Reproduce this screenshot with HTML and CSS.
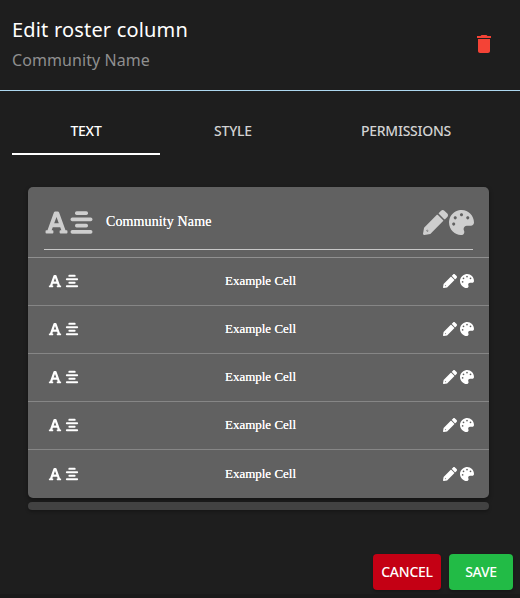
FILE: index.html
```html
<!DOCTYPE html>
<html lang="en">
<head>
<meta charset="utf-8">
<title>Edit roster column</title>
<link rel="stylesheet" href="styles.css">
</head>
<body>
<svg class="symbols" aria-hidden="true">
  <symbol id="font" viewBox="0 0 448 512"><path d="M432 416h-23.41L277.53 53.69A32 32 0 0 0 247.58 32h-47.16a32 32 0 0 0-29.95 21.69L39.41 416H16a16 16 0 0 0-16 16v32a16 16 0 0 0 16 16h128a16 16 0 0 0 16-16v-32a16 16 0 0 0-16-16h-19.58l23.3-64h152.56l23.3 64H304a16 16 0 0 0-16 16v32a16 16 0 0 0 16 16h128a16 16 0 0 0 16-16v-32a16 16 0 0 0-16-16zM176.85 272L224 142.51 271.15 272z"/></symbol>
  <symbol id="align" viewBox="0 0 448 512"><rect x="91" y="27" width="266" height="76" rx="34"/><rect y="154" width="448" height="76" rx="34"/><rect x="91" y="282" width="266" height="76" rx="34"/><rect y="410" width="448" height="76" rx="34"/></symbol>
  <symbol id="pencil" viewBox="0 0 512 512"><path d="M497.9 142.1l-46.1 46.1c-4.7 4.7-12.3 4.7-17 0l-111-111c-4.7-4.7-4.7-12.3 0-17l46.1-46.1c18.7-18.7 49.1-18.7 67.9 0l60.1 60.1c18.8 18.7 18.8 49.1 0 67.9zM284.2 99.8L21.6 362.4.4 483.9c-2.9 16.4 11.4 30.6 27.8 27.8l121.5-21.3 262.6-262.6c4.7-4.7 4.7-12.3 0-17l-111-111c-4.8-4.7-12.4-4.7-17.1 0zM88 392v32h32l-32 22-20-20z" fill-rule="evenodd"/></symbol>
  <symbol id="palette" viewBox="0 0 512 512"><path d="M204.3 5C104.9 24.4 24.8 104.3 5.2 203.4c-37 187 131.7 326.4 258.8 306.7 41.2-6.4 61.4-54.6 42.5-91.7-23.1-45.4 9.9-98.4 60.9-98.4h79.7c35.8 0 64.8-29.6 64.9-65.3C511.5 97.1 368.1-26.9 204.3 5zM96 320c-17.7 0-32-14.3-32-32s14.3-32 32-32 32 14.3 32 32-14.3 32-32 32zm32-128c-17.7 0-32-14.3-32-32s14.3-32 32-32 32 14.3 32 32-14.3 32-32 32zm128-64c-17.7 0-32-14.3-32-32s14.3-32 32-32 32 14.3 32 32-14.3 32-32 32zm128 64c-17.7 0-32-14.3-32-32s14.3-32 32-32 32 14.3 32 32-14.3 32-32 32z"/></symbol>
</svg>
<main class="dialog">
  <header class="header">
    <div>
      <h1 class="title">Edit roster column</h1>
      <p class="subtitle">Community Name</p>
    </div>
    <svg class="trash" viewBox="0 0 24 24"><path d="M6 19c0 1.1.9 2 2 2h8c1.1 0 2-.9 2-2V7H6v12zM19 4h-3.5l-1-1h-5l-1 1H5v2h14V4z"/></svg>
  </header>
  <nav class="tabs">
    <div class="tab active">TEXT</div>
    <div class="tab">STYLE</div>
    <div class="tab">PERMISSIONS</div>
  </nav>
  <section class="card">
    <div class="card-head">
      <div class="head-field">
        <svg><use href="#font"/></svg>
        <svg><use href="#align"/></svg>
        <span class="head-name">Community Name</span>
        <svg><use href="#pencil"/></svg>
        <svg class="palette"><use href="#palette"/></svg>
      </div>
    </div>
    <div class="row"><div class="icons"><svg><use href="#font"/></svg><svg><use href="#align"/></svg></div><span>Example Cell</span><div class="icons end"><svg><use href="#pencil"/></svg><svg><use href="#palette"/></svg></div></div>
    <div class="row"><div class="icons"><svg><use href="#font"/></svg><svg><use href="#align"/></svg></div><span>Example Cell</span><div class="icons end"><svg><use href="#pencil"/></svg><svg><use href="#palette"/></svg></div></div>
    <div class="row"><div class="icons"><svg><use href="#font"/></svg><svg><use href="#align"/></svg></div><span>Example Cell</span><div class="icons end"><svg><use href="#pencil"/></svg><svg><use href="#palette"/></svg></div></div>
    <div class="row"><div class="icons"><svg><use href="#font"/></svg><svg><use href="#align"/></svg></div><span>Example Cell</span><div class="icons end"><svg><use href="#pencil"/></svg><svg><use href="#palette"/></svg></div></div>
    <div class="row last"><div class="icons"><svg><use href="#font"/></svg><svg><use href="#align"/></svg></div><span>Example Cell</span><div class="icons end"><svg><use href="#pencil"/></svg><svg><use href="#palette"/></svg></div></div>
  </section>
  <div class="scrollbar"></div>
  <footer class="actions">
    <button class="button cancel">CANCEL</button>
    <button class="button save">SAVE</button>
  </footer>
</main>
</body>
</html>
```
FILE: styles.css
```css
* { box-sizing: border-box; }
body {
  margin: 0;
  background: #1e1e1e;
  color: #fff;
  font-family: "Noto Sans", sans-serif;
}
svg { display: block; fill: currentColor; flex: none; }
.symbols { display: none; }
.dialog { width: 520px; height: 598px; overflow: hidden; border-bottom: 4px solid #1a1a1a; }
.header {
  height: 91px;
  padding: 14px 26px 0 12px;
  display: flex;
  justify-content: space-between;
  border-bottom: 1px solid #add8f0;
}
.title { margin: 0; font-size: 20px; line-height: 32px; font-weight: 400; letter-spacing: .18px; }
.subtitle { margin: 0; font-size: 16px; line-height: 28px; letter-spacing: .08px; color: #8f8f8f; }
.trash { width: 24px; height: 24px; margin-top: 18px; margin-right: -2px; color: #f44336; }
.tabs {
  height: 64px;
  padding: 16px 12px 0;
  display: grid;
  grid-template-columns: 148px 146px 200px;
}
.tab {
  height: 48px;
  font-size: 14px;
  font-weight: 500;
  line-height: 48px;
  text-align: center;
  letter-spacing: -0.25px;
  color: #d2d2d2;
}
.tab.active { color: #fff; border-bottom: 2px solid #fff; }
.card {
  width: 461px;
  height: 311px;
  margin: 32px 0 0 28px;
  background: #616161;
  border-radius: 5px;
  box-shadow: 0 2px 4px rgba(0, 0, 0, .4);
  font-family: "Liberation Serif", serif;
}
.card-head { height: 71px; padding: 8px 16px 0; border-bottom: 1px solid #909090; }
.head-field {
  height: 55px;
  display: flex;
  align-items: center;
  border-bottom: 1px solid #c8c8c8;
}
.head-field svg { width: 25px; height: 25px; color: #cecece; }
.head-name {
  flex: 1;
  margin-left: 12px;
  font-size: 14px;
  line-height: 20px;
  letter-spacing: .12px;
  text-shadow: 0 0 .5px #fff;
}
.head-field .palette { margin-left: 1px; margin-right: -.5px; }
.row {
  height: 48px;
  padding: 0 16px 2px 20px;
  display: grid;
  grid-template-columns: 150px 1fr 150px;
  align-items: center;
  border-bottom: 1px solid #868686;
}
.row span { font-size: 13px; text-align: center; text-shadow: 0 0 .5px #fff; }
.row.last { border: 0; padding-bottom: 0; }
.icons { display: flex; gap: 3px; }
.icons svg { width: 14px; height: 14px; }
.icons.end { justify-content: flex-end; margin-right: -.6px; }
.scrollbar {
  width: 461px;
  height: 8px;
  margin: 4px 0 0 28px;
  background: #424242;
  border-radius: 4px;
  box-shadow: 0 2px 3px rgba(0, 0, 0, .25);
}
.actions { display: flex; justify-content: flex-end; gap: 8px; padding: 44px 7px 0 0; }
.button {
  height: 36px;
  padding: 0;
  border: 0;
  border-radius: 4px;
  color: #fff;
  font: 500 14px/36px "Noto Sans", sans-serif;
  letter-spacing: -0.25px;
  box-shadow: 0 2px 3px rgba(0, 0, 0, .25);
}
.cancel { width: 68px; background: #c40014; }
.save { width: 64px; background: #22bb46; }
```
